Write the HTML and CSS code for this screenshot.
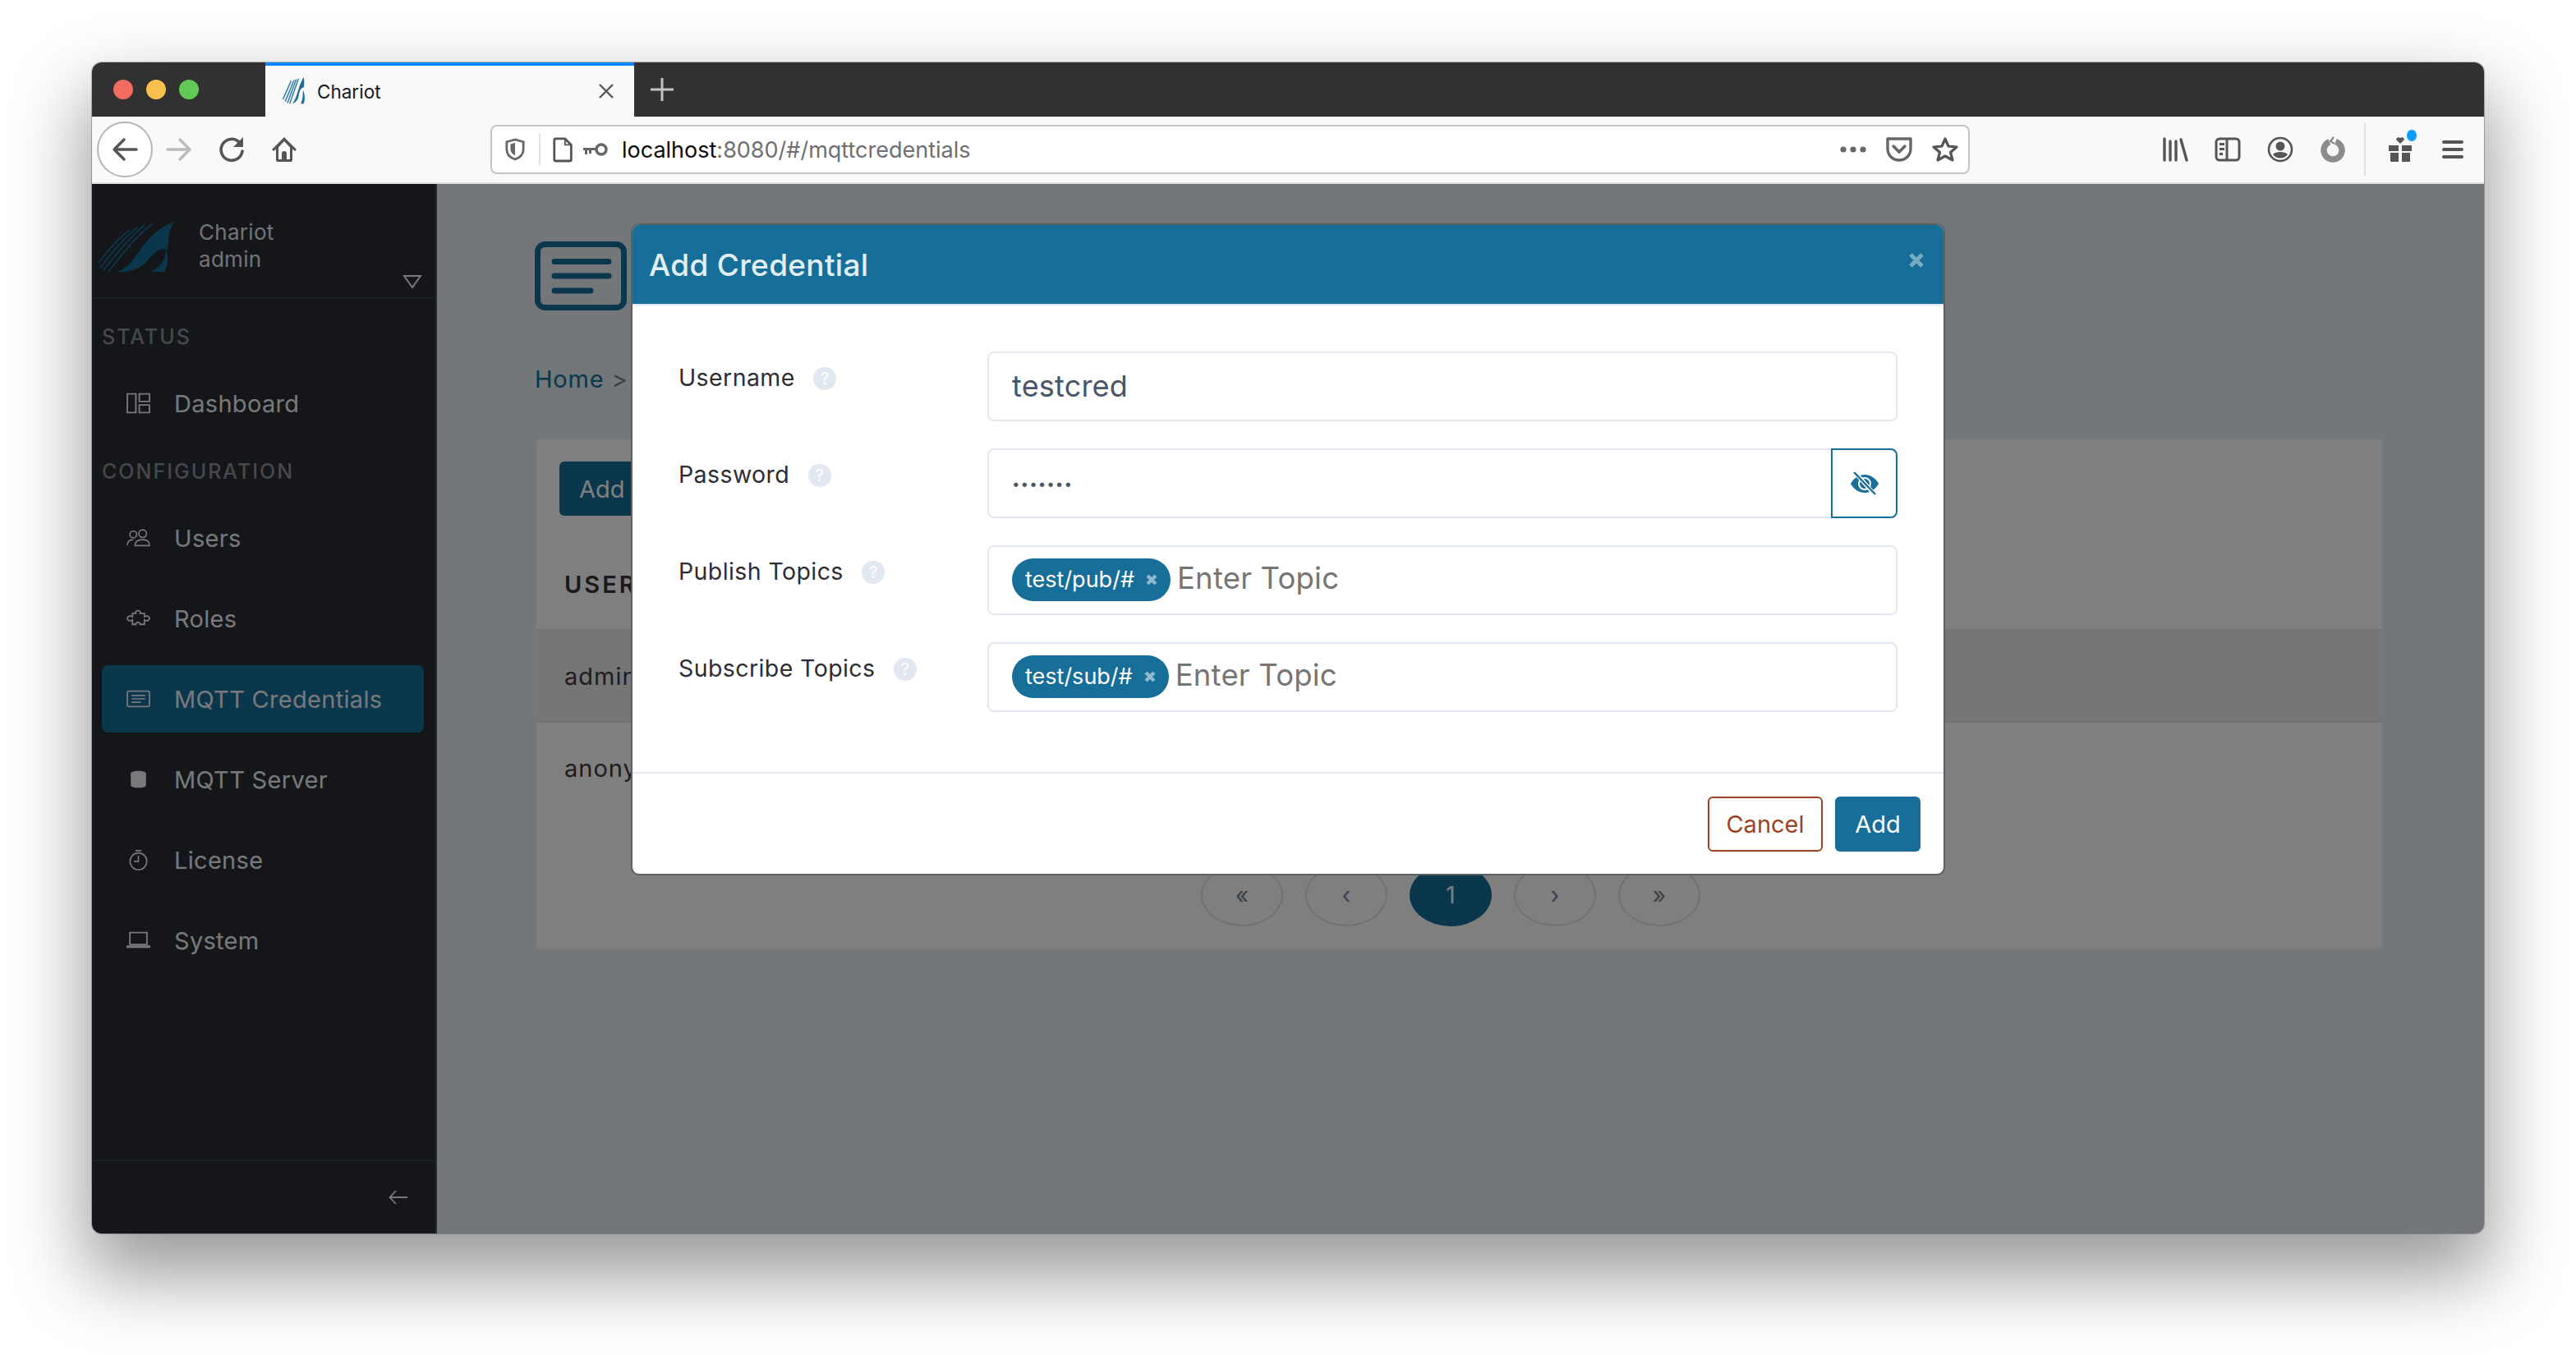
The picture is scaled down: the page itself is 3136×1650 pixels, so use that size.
FILE: index.html
```html
<!DOCTYPE html>
<html lang="en">
<head>
    <meta charset="UTF-8">
    <title>Chariot</title>
    <link rel="stylesheet" href="styles.css">
</head>
<body>
    <div class="window">
        <div class="tabbar">
            <div class="lights">
                <span class="light red"></span>
                <span class="light yellow"></span>
                <span class="light green"></span>
            </div>
            <div class="tab">
                <svg class="favicon" viewBox="0 0 32 40">
                    <path d="M1 31 12 6M4 34 16 5M7 36 19 4M10 37 22 3" fill="none" stroke="#2b7aa3" stroke-width="1.6"/>
                    <path d="M13 37C20 32 21 14 29 1c1 6 1 10 0 14-4 0-6 6-7 12-1 5-4 9-9 10zM25 37c3-6 3-12 3-18 3 5 3 13 1 18z" fill="#166e99"/>
                </svg>
                <span class="tab-title">Chariot</span>
                <svg class="tab-close" viewBox="0 0 20 20"><path d="M2 2 18 18M18 2 2 18" stroke="#555" stroke-width="2.4"/></svg>
            </div>
            <svg class="new-tab" viewBox="0 0 28 28"><path d="M14 0V28M0 14H28" stroke="#c4c4c4" stroke-width="3"/></svg>
        </div>

        <div class="toolbar">
            <div class="back-btn">
                <svg class="tb-icon" viewBox="0 0 32 32"><path d="M30 16H4M15 4 3 16l12 12" fill="none" stroke="#555" stroke-width="3.4" stroke-linecap="round" stroke-linejoin="round"/></svg>
            </div>
            <div class="tb-btn">
                <svg class="tb-icon" viewBox="0 0 32 32"><path d="M2 16H28M17 4l12 12-12 12" fill="none" stroke="#bbb" stroke-width="3.4" stroke-linecap="round" stroke-linejoin="round"/></svg>
            </div>
            <div class="tb-btn">
                <svg class="tb-icon" viewBox="0 0 32 32"><path d="M29 18A13 13 0 1 1 24 6L28 10" fill="none" stroke="#555" stroke-width="3.6" stroke-linecap="round"/><path d="M30 1V13H18z" fill="#555"/></svg>
            </div>
            <div class="tb-btn">
                <svg class="tb-icon" viewBox="0 0 32 32"><path d="M16 1 1 16l2 2 3-2.500V29a2 2 0 0 0 2 2h16a2 2 0 0 0 2-2V15.500l3 2.500 2-2zM16 6l7 7.500V28h-4v-7a3 3 0 0 0-6 0v7H9V13.500z" fill="#555" fill-rule="evenodd"/></svg>
            </div>

            <div class="urlbar">
                <svg class="url-shield" viewBox="0 0 26 30"><path d="M13 2 2 5v10c0 7 5 11 11 13 6-2 11-6 11-13V5z" fill="none" stroke="#666" stroke-width="3"/><path d="M13 6v17c-3-2-6-4-6-9V8z" fill="#666"/></svg>
                <span class="url-sep"></span>
                <svg class="url-page" viewBox="0 0 30 32"><path d="M3 4a2 2 0 0 1 2-2h12l8 8v19a2 2 0 0 1-2 2H5a2 2 0 0 1-2-2z" fill="#fff" stroke="#555" stroke-width="3"/><path d="M17 2v8h8" fill="none" stroke="#555" stroke-width="2"/></svg>
                <svg class="url-key" viewBox="0 0 32 18"><circle cx="23" cy="9" r="6" fill="none" stroke="#666" stroke-width="3.5"/><path d="M17 7H1v3h2v5h3v-5h2v4h3v-4h6z" fill="#666"/></svg>
                <span class="url-text">localhost<span class="url-dim">:8080/#/mqttcredentials</span></span>
                <svg class="url-more" viewBox="0 0 32 8"><circle cx="4" cy="4" r="3.6" fill="#666"/><circle cx="16" cy="4" r="3.6" fill="#666"/><circle cx="28" cy="4" r="3.6" fill="#666"/></svg>
                <svg class="url-pocket" viewBox="0 0 32 30"><path d="M2 2H30V14C30 22 24 28 16 28S2 22 2 14z" fill="none" stroke="#666" stroke-width="3.4" stroke-linejoin="round"/><path d="M9 11l7 7 7-7" fill="none" stroke="#666" stroke-width="3.4" stroke-linecap="round"/></svg>
                <svg class="url-star" viewBox="0 0 32 32"><path d="M16 3 20 12 30 13 22.500 19.500 25 29 16 24 7 29 9.500 19.500 2 13 12 12z" fill="none" stroke="#555" stroke-width="3.2" stroke-linejoin="round"/></svg>
            </div>

            <div class="tb-right">
                <div class="tb-btn">
                    <svg class="tb-icon" viewBox="0 0 32 32"><path d="M3 3V29M10 6V29M17 6V29M23 4 30 29" fill="none" stroke="#555" stroke-width="3.400" stroke-linecap="round"/></svg>
                </div>
                <div class="tb-btn">
                    <svg class="tb-icon" viewBox="0 0 32 32"><rect x="2" y="3" width="28" height="26" rx="4" fill="none" stroke="#555" stroke-width="3"/><path d="M15 3V29" stroke="#555" stroke-width="3"/><path d="M6 8h6v3H6zM6 14h6v3H6zM6 20h4v3H6z" fill="#555"/></svg>
                </div>
                <div class="tb-btn">
                    <svg class="tb-icon" viewBox="0 0 32 32"><circle cx="16" cy="16" r="14" fill="none" stroke="#555" stroke-width="2.600"/><circle cx="16" cy="12" r="5.500" fill="#555"/><path d="M7 22c3-4 15-4 18 0-4 6-14 6-18 0z" fill="#555"/></svg>
                </div>
                <div class="tb-btn">
                    <svg class="tb-icon" viewBox="0 0 32 32"><circle cx="16" cy="17" r="11" fill="none" stroke="#8c8c8c" stroke-width="7.500" stroke-dasharray="61 8" transform="rotate(-72 16 17)"/><path d="M17 1 13 6 18 9" fill="none" stroke="#8c8c8c" stroke-width="2.400"/></svg>
                </div>
                <span class="tb-sep"></span>
                <div class="tb-btn gift">
                    <svg class="tb-icon" viewBox="0 0 32 32"><path d="M2 11H14V18H2zM18 11H30V18H18zM4 20H14V31H5a1 1 0 0 1-1-1zM18 20H28V30a1 1 0 0 1-1 1H18z" fill="#555"/><path d="M16 9 11 4a3 3 0 0 1 5-2 3 3 0 0 1 5 2z" fill="#555"/></svg>
                    <span class="gift-dot"></span>
                </div>
                <div class="tb-btn">
                    <svg class="tb-icon" viewBox="0 0 32 32"><path d="M5 7H27M5 16H27M5 25H27" stroke="#555" stroke-width="4" stroke-linecap="round"/></svg>
                </div>
            </div>
        </div>

        <div class="app">
            <aside class="sidebar">
                <div class="side-head">
                    <svg class="side-logo" viewBox="0 0 92 62">
                        <path d="M0 50C12 34 24 20 38 10M2 56C16 38 30 20 47 7M6 59C20 42 36 20 56 4M12 61C26 44 42 20 66 2" fill="none" stroke="#166e99" stroke-width="1.800"/>
                        <path d="M22 61C46 56 52 14 92 0c-6 8-7 22-8 34-14-4-20 10-28 17-10 8-22 11-34 10z" fill="#166e99"/>
                        <path d="M62 61c12-4 20-14 20-28 3 9 3 20-2 28z" fill="#166e99"/>
                    </svg>
                    <div class="side-user">
                        <span>Chariot</span>
                        <span>admin</span>
                    </div>
                    <svg class="side-caret" viewBox="0 0 24 18"><path d="M2 2H22L12 16z" fill="none" stroke="#f0f2f5" stroke-width="2"/></svg>
                </div>

                <nav class="side-nav">
                    <h5 class="side-label first">STATUS</h5>
                    <a class="side-item">
                        <svg class="side-icon" viewBox="0 0 28 24"><path d="M1 1h10v22H1zM15 1h12v9H15zM15 14h12v9H15z" fill="none" stroke="#f0f2f5" stroke-width="1.800"/></svg>
                        Dashboard
                    </a>
                    <h5 class="side-label">CONFIGURATION</h5>
                    <a class="side-item">
                        <svg class="side-icon" viewBox="0 0 28 20"><circle cx="8" cy="6" r="4" fill="none" stroke="#f0f2f5" stroke-width="1.600"/><circle cx="19" cy="5" r="4.500" fill="none" stroke="#f0f2f5" stroke-width="1.600"/><path d="M1 19c0-5 3-7 7-7M10 19c0-5 4-7 9-7s8 2 8 7z" fill="none" stroke="#f0f2f5" stroke-width="1.600"/></svg>
                        Users
                    </a>
                    <a class="side-item">
                        <svg class="side-icon" viewBox="0 0 28 20"><path d="M7 4h4C9 0 18 0 16 4h5v4c3-2 6 0 6 2s-3 4-6 2v5h-5c1-3-6-3-5 0H7v-5c-3 2-6 0-6-2s3-4 6-2z" fill="none" stroke="#f0f2f5" stroke-width="1.700"/></svg>
                        Roles
                    </a>
                    <a class="side-item active">
                        <svg class="side-icon" viewBox="0 0 28 20"><rect x="1" y="1" width="26" height="18" rx="1.500" fill="none" stroke="#f0f2f5" stroke-width="1.700"/><path d="M6 6H22M6 10H22M6 14H17" stroke="#f0f2f5" stroke-width="1.600"/></svg>
                        MQTT Credentials
                    </a>
                    <a class="side-item">
                        <svg class="side-icon" viewBox="0 0 28 22"><path d="M5 4C5 0 23 0 23 4V18C23 22 5 22 5 18z" fill="#f0f2f5"/></svg>
                        MQTT Server
                    </a>
                    <a class="side-item">
                        <svg class="side-icon" viewBox="0 0 28 28"><circle cx="14" cy="16" r="11" fill="none" stroke="#f0f2f5" stroke-width="1.700"/><path d="M14 9v7H8M10 2H18" fill="none" stroke="#f0f2f5" stroke-width="1.800"/></svg>
                        License
                    </a>
                    <a class="side-item">
                        <svg class="side-icon" viewBox="0 0 28 20"><path d="M4 1H24V15H4z" fill="none" stroke="#f0f2f5" stroke-width="1.800"/><path d="M0 16H28V19H0z" fill="#f0f2f5"/></svg>
                        System
                    </a>
                </nav>

                <div class="side-foot">
                    <svg class="side-collapse" viewBox="0 0 24 20"><path d="M23 10H2M9 2 1.500 10 9 18" fill="none" stroke="#f0f2f5" stroke-width="1.800"/></svg>
                </div>
            </aside>

            <main class="main">
                <svg class="page-icon" viewBox="0 0 112 84">
                    <rect x="3.500" y="3.500" width="105" height="77" rx="9" fill="none" stroke="#166e99" stroke-width="7"/>
                    <path d="M24 24.500H90M24 42H90M24 60H68" stroke="#166e99" stroke-width="7" stroke-linecap="round"/>
                </svg>
                <div class="crumbs"><span class="crumb-link">Home</span> <span class="crumb-sep">&gt;</span></div>
                <section class="card">
                    <div class="card-top">
                        <button class="btn-add-cred" type="button">Add</button>
                        <div class="col-head">USER</div>
                    </div>
                    <div class="row shaded">admin</div>
                    <div class="row">anony</div>
                    <div class="pager">
                        <span class="page-btn">«</span>
                        <span class="page-btn">‹</span>
                        <span class="page-btn current">1</span>
                        <span class="page-btn">›</span>
                        <span class="page-btn">»</span>
                    </div>
                </section>
            </main>

            <div class="overlay">
                <div class="modal">
                    <header class="modal-head">
                        <h3>Add Credential</h3>
                        <svg class="modal-close" viewBox="0 0 18 18"><path d="M2 2 16 16M16 2 2 16" stroke="#79abc3" stroke-width="5"/></svg>
                    </header>
                    <div class="modal-body">
                        <div class="form-row">
                            <label class="form-label">Username <span class="help">?</span></label>
                            <div class="field"><span class="field-value">testcred</span></div>
                        </div>
                        <div class="form-row">
                            <label class="form-label">Password <span class="help">?</span></label>
                            <div class="field-group">
                                <div class="field joined"><span class="field-dots">•••••••</span></div>
                                <div class="eye-btn">
                                    <svg viewBox="0 0 36 28"><path d="M1 14C5 7 11 3 18 3s13 4 17 11c-4 7-10 11-17 11S5 21 1 14z" fill="#166e99"/><circle cx="18" cy="14" r="7" fill="none" stroke="#fff" stroke-width="2"/><path d="M6 0 30 27" stroke="#fff" stroke-width="5"/><path d="M5 0 31 27" stroke="#166e99" stroke-width="2.400"/></svg>
                                </div>
                            </div>
                        </div>
                        <div class="form-row">
                            <label class="form-label">Publish Topics <span class="help">?</span></label>
                            <div class="field">
                                <span class="chip">test/pub/# <svg class="chip-x" viewBox="0 0 14 14"><path d="M2 2 12 12M12 2 2 12" stroke="#8fb9cd" stroke-width="4.200"/></svg></span>
                                <span class="field-hint">Enter Topic</span>
                            </div>
                        </div>
                        <div class="form-row">
                            <label class="form-label">Subscribe Topics <span class="help">?</span></label>
                            <div class="field">
                                <span class="chip">test/sub/# <svg class="chip-x" viewBox="0 0 14 14"><path d="M2 2 12 12M12 2 2 12" stroke="#8fb9cd" stroke-width="4.200"/></svg></span>
                                <span class="field-hint">Enter Topic</span>
                            </div>
                        </div>
                    </div>
                    <footer class="modal-foot">
                        <button class="btn btn-cancel" type="button">Cancel</button>
                        <button class="btn btn-primary" type="button">Add</button>
                    </footer>
                </div>
            </div>
        </div>
    </div>
</body>
</html>
```

FILE: styles.css
```css
*{
    margin: 0;
    padding: 0;
    box-sizing: border-box;
}

html, body{
    width: 3136px;
    height: 1650px;
    overflow: hidden;
    background: #fff;
}

body{
    padding: 76px 112px 0 112px;
    font-family: "Inter", "Liberation Sans", sans-serif;
}

svg{
    display: block;
    flex: none;
}

.window{
    width: 2912px;
    height: 1426px;
    border-radius: 12px;
    overflow: hidden;
    display: flex;
    flex-direction: column;
    background: #e8eef4;
    box-shadow: 0 0 0 1px rgba(0, 0, 0, .25), 0 44px 90px 8px rgba(0, 0, 0, .4);
}

/* browser chrome */
.tabbar{
    height: 66px;
    background: #313131;
    display: flex;
    align-items: stretch;
    flex: none;
}

.lights{
    width: 211px;
    padding-left: 26px;
    display: flex;
    align-items: center;
    gap: 16px;
}

.light{
    width: 24px;
    height: 24px;
    border-radius: 50%;
}

.light.red{ background: #f26d60; }
.light.yellow{ background: #f7c04c; }
.light.green{ background: #63c956; }

.tab{
    width: 449px;
    background: #f9f9fa;
    border-top: 4px solid #0a84ff;
    display: flex;
    align-items: center;
    padding-left: 20px;
}

.favicon{
    width: 30px;
    height: 36px;
}

.tab-title{
    margin-left: 13px;
    font-size: 22.500px;
    color: #18181a;
    flex: 1;
}

.tab-close{
    width: 20px;
    height: 20px;
    margin-right: 24px;
}

.new-tab{
    width: 28px;
    height: 28px;
    margin: 19px 0 0 20px;
}

.toolbar{
    height: 82px;
    flex: none;
    background: #f9f9fa;
    border-bottom: 2px solid #e0e0e1;
    display: flex;
    align-items: center;
    padding: 0 6px;
}

.back-btn{
    width: 68px;
    height: 68px;
    border-radius: 50%;
    background: #fff;
    border: 2px solid #b5b5b5;
    display: flex;
    align-items: center;
    justify-content: center;
}

.tb-btn{
    width: 64px;
    height: 64px;
    display: flex;
    align-items: center;
    justify-content: center;
    position: relative;
}

.tb-icon{
    width: 32px;
    height: 32px;
}

.urlbar{
    width: 1801px;
    height: 60px;
    margin-left: 219px;
    background: #fff;
    border: 2px solid #c4c4c4;
    border-radius: 8px;
    display: flex;
    align-items: center;
    padding: 0 12px 0 16px;
}

.url-shield{
    width: 24px;
    height: 28px;
}

.url-sep{
    width: 2px;
    height: 40px;
    margin: 0 14px 0 17px;
    background: #e3e3e3;
}

.url-page{
    width: 28px;
    height: 32px;
}

.url-key{
    width: 32px;
    height: 18px;
    margin-left: 9px;
}

.url-text{
    margin-left: 16px;
    font-size: 27px;
    color: #0c0c0d;
    flex: 1;
}

.url-dim{
    color: #6f6f72;
}

.url-more{
    width: 32px;
    height: 8px;
}

.url-pocket{
    width: 32px;
    height: 30px;
    margin-left: 24px;
}

.url-star{
    width: 32px;
    height: 32px;
    margin-left: 24px;
}

.tb-right{
    margin-left: auto;
    display: flex;
    align-items: center;
}

.tb-sep{
    width: 2px;
    height: 64px;
    margin: 0 10px 0 6px;
    background: #e0e0e1;
}

.gift-dot{
    position: absolute;
    top: 8px;
    right: 12px;
    width: 12px;
    height: 14px;
    border-radius: 50%;
    background: #0a9dff;
}

/* app under the dialog */
.app{
    flex: 1;
    position: relative;
    display: flex;
    min-height: 0;
}

.sidebar{
    width: 420px;
    flex: none;
    background: #282c34;
    border-right: 2px solid #4a5568;
    display: flex;
    flex-direction: column;
    color: #f0f2f5;
}

.side-head{
    height: 140px;
    border-bottom: 2px solid #3a404b;
    display: flex;
    padding: 46px 0 0 8px;
    position: relative;
    flex: none;
}

.side-logo{
    width: 92px;
    height: 62px;
}

.side-user{
    margin-left: 30px;
    margin-top: -4px;
    display: flex;
    flex-direction: column;
    font-size: 26px;
    line-height: 33px;
    letter-spacing: .3px;
    color: #e4e7ea;
}

.side-caret{
    position: absolute;
    right: 16px;
    top: 110px;
    width: 24px;
    height: 18px;
}

.side-nav{
    flex: 1;
    padding: 0 14px 0 12px;
}

.side-label{
    font-size: 25px;
    font-weight: 500;
    letter-spacing: 2px;
    line-height: 30px;
    color: #8b9098;
    margin-top: 27px;
    margin-bottom: 25px;
}

.side-label.first{
    margin-top: 31px;
}

.side-item{
    height: 82px;
    margin-bottom: 16px;
    display: flex;
    align-items: center;
    padding-left: 30px;
    border-radius: 8px;
    font-size: 29px;
    letter-spacing: .3px;
}

.side-item.active{
    background: #166e99;
}

.side-icon{
    width: 29px;
    height: 26px;
    margin-right: 29px;
}

.side-foot{
    height: 90px;
    flex: none;
    border-top: 2px solid #3a404b;
    display: flex;
    justify-content: flex-end;
    align-items: center;
    padding: 0 33px 0 0;
}

.side-collapse{
    width: 24px;
    height: 20px;
}

.main{
    flex: 1;
    padding: 70px 120px 0 119px;
}

.page-icon{
    width: 112px;
    height: 84px;
}

.crumbs{
    margin-top: 66px;
    font-size: 29px;
    line-height: 36px;
    letter-spacing: .8px;
}

.crumb-link{
    color: #166e99;
}

.crumb-sep{
    color: #718096;
}

.card{
    width: 2251px;
    height: 624px;
    margin-top: 53px;
    background: #fff;
    border: 2px solid #f0f0f0;
    border-radius: 6px;
    overflow: hidden;
}

.card-top{
    height: 233px;
    padding: 27px 0 0 28px;
    border-bottom: 2px solid #e8e8e8;
}

.btn-add-cred{
    width: 200px;
    height: 66px;
    padding-left: 24px;
    background: #166e99;
    color: #fff;
    border: 0;
    border-radius: 6px;
    font: inherit;
    font-size: 29px;
    text-align: left;
    display: block;
}

.col-head{
    margin-top: 66px;
    margin-left: 6px;
    font-size: 29px;
    line-height: 36px;
    font-weight: 600;
    letter-spacing: 3px;
    color: #33333d;
}

.row{
    height: 112px;
    padding: 38px 0 0 34px;
    font-size: 29px;
    line-height: 36px;
    letter-spacing: 1px;
    color: #3a3a42;
}

.row.shaded{
    background: #ececec;
    border-bottom: 2px solid #e2e2e2;
}

.pager{
    display: flex;
    gap: 27px;
    margin: 60px 0 0 809px;
}

.page-btn{
    width: 100px;
    height: 76px;
    border: 2px solid #e2e2e2;
    border-radius: 50px / 38px;
    display: flex;
    align-items: center;
    justify-content: center;
    font-size: 28px;
    color: #718096;
}

.page-btn.current{
    background: #166e99;
    border-color: #166e99;
    color: #fff;
}

/* dialog */
.overlay{
    position: absolute;
    inset: 0;
    background: rgba(0, 0, 0, .5);
    display: flex;
    justify-content: center;
    padding-top: 50px;
}

.modal{
    width: 1596px;
    height: 790px;
    background: #fff;
    border-radius: 8px;
    box-shadow: 0 0 0 2px #5f6061;
    overflow: hidden;
    display: flex;
    flex-direction: column;
}

.modal-head{
    height: 98px;
    flex: none;
    background: #166e99;
    border-bottom: 2px solid #e2e8f0;
    display: flex;
    align-items: center;
    justify-content: space-between;
    padding: 0 24px 0 20px;
}

.modal-head h3{
    font-size: 37px;
    font-weight: 500;
    letter-spacing: .3px;
    color: #e3eef4;
}

.modal-close{
    width: 18px;
    height: 18px;
    margin-bottom: 10px;
}

.modal-body{
    flex: 1;
    padding: 56px 56px 0 56px;
    display: flex;
    flex-direction: column;
    gap: 33px;
}

.form-row{
    display: flex;
    height: 85px;
}

.form-label{
    width: 376px;
    flex: none;
    padding-top: 14px;
    font-size: 28.500px;
    line-height: 36px;
    letter-spacing: .4px;
    color: #2d2d33;
}

.help{
    display: inline-block;
    width: 28px;
    height: 28px;
    margin-left: 14px;
    border-radius: 50%;
    background: #e2e8f0;
    color: #fff;
    font-size: 20px;
    line-height: 28px;
    letter-spacing: 0;
    text-align: center;
    vertical-align: 2px;
}

.field{
    flex: 1;
    height: 85px;
    border: 2px solid #e2e8f0;
    border-radius: 8px;
    display: flex;
    align-items: center;
    padding: 0 28px;
}

.field-group{
    flex: 1;
    display: flex;
}

.field.joined{
    border-right: 0;
    border-radius: 8px 0 0 8px;
}

.field-value{
    font-size: 36px;
    letter-spacing: .2px;
    color: #4a5568;
    margin-bottom: 2px;
}

.field-dots{
    font-size: 17px;
    color: #4a5568;
    letter-spacing: 1px;
}

.eye-btn{
    width: 81px;
    height: 85px;
    flex: none;
    border: 2px solid #166e99;
    border-radius: 0 8px 8px 0;
    display: flex;
    align-items: center;
    justify-content: center;
}

.eye-btn svg{
    width: 36px;
    height: 28px;
}

.chip{
    height: 52px;
    padding: 0 16px;
    border-radius: 26px;
    background: #166e99;
    color: #fff;
    font-size: 27px;
    display: flex;
    align-items: center;
    gap: 14px;
    margin-right: 8px;
    margin-bottom: 2px;
}

.chip-x{
    width: 14px;
    height: 14px;
}

.field-hint{
    font-size: 36.500px;
    letter-spacing: .2px;
    color: #757575;
    margin-bottom: 6px;
}

.modal-foot{
    height: 124px;
    flex: none;
    border-top: 2px solid #e2e8f0;
    display: flex;
    justify-content: flex-end;
    align-items: flex-start;
    gap: 15px;
    padding: 28px 28px 0 0;
}

.btn{
    height: 67px;
    border-radius: 6px;
    font-family: inherit;
    font-size: 29px;
}

.btn-cancel{
    width: 140px;
    background: #fff;
    border: 2px solid #9c4221;
    color: #9c4221;
}

.btn-primary{
    width: 104px;
    background: #166e99;
    border: 0;
    color: #fff;
}
```
